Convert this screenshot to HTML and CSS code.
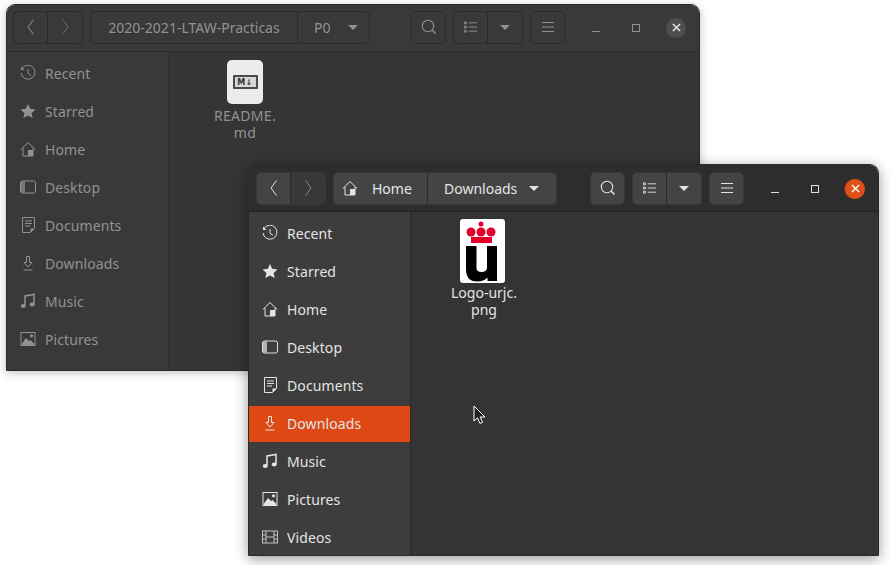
FILE: index.html
```html
<!DOCTYPE html>
<html>
	<head>
		<meta http-equiv="Content-Type" content="text/html; charset=UTF-8">
		<title>Files</title>
		<link rel="stylesheet" href="styles.css">
	</head>
	<body>
		<svg class="defs" width="0" height="0">
			<symbol id="i-back" viewBox="0 0 8 16"><path d="M6.500 .5 1 8l5.500 7.500" fill="none" stroke="currentColor"/></symbol>
			<symbol id="i-next" viewBox="0 0 8 16"><path d="M1.500 .5 7 8l-5.500 7.500" fill="none" stroke="currentColor"/></symbol>
			<symbol id="i-search" viewBox="0 0 16 16"><circle cx="7" cy="7" r="5.700" fill="none" stroke="currentColor" stroke-width="1.100"/><path d="m11.300 11.300 3.200 3.200" fill="none" stroke="currentColor" stroke-width="1.500"/></symbol>
			<symbol id="i-list" viewBox="0 0 14 12"><path d="M.5.5h2v2h-2zM.5 5h2v2h-2zM.5 9.500h2v2h-2z" fill="none" stroke="currentColor"/><path d="M5 1.500h9M5 6h9M5 10.500h9" fill="none" stroke="currentColor"/></symbol>
			<symbol id="i-menu" viewBox="0 0 12 10"><path d="M0 .5h12M0 5h12M0 9.500h12" fill="none" stroke="currentColor"/></symbol>
			<symbol id="i-recent" viewBox="0 0 16 16"><path d="M2 3.500A7 7 0 1 1 1 8" fill="none" stroke="currentColor"/><path d="M1 1.500v3.500h3.500z" fill="currentColor"/><path d="M8 4v4.300l3 2" fill="none" stroke="currentColor"/></symbol>
			<symbol id="i-star" viewBox="0 0 16 16"><path d="m8 1 2.200 4.800 5.300.6-3.900 3.500 1.100 5.200L8 12.400l-4.700 2.700 1.100-5.200L.5 6.400l5.300-.6z" fill="currentColor"/></symbol>
			<symbol id="i-home" viewBox="0 0 16 16"><path d="M.8 8.500 8 1.500l7.200 7M3 7v8h10V7" fill="none" stroke="currentColor"/><path d="M8 9h5v6H8z" fill="currentColor"/></symbol>
			<symbol id="i-desktop" viewBox="0 0 16 16"><rect x=".5" y="2" width="15" height="12" rx="2" fill="none" stroke="currentColor"/><path d="M2 2.500h3v11H2a1 1 0 0 1-1-1v-9a1 1 0 0 1 1-1z" fill="currentColor" opacity=".7"/></symbol>
			<symbol id="i-doc" viewBox="0 0 16 16"><path d="M10.500 15.500h-8v-15h12v11z" fill="none" stroke="currentColor"/><path d="M10.500 15.500v-4h4z" fill="currentColor"/><path d="M5 4h7M5 6.500h7M5 9h5" fill="none" stroke="currentColor"/></symbol>
			<symbol id="i-down" viewBox="0 0 16 16"><path d="M6.500 1.500h3v6h2.500L8 12 4 7.500h2.500z" fill="none" stroke="currentColor"/><path d="M3.500 15h9" fill="none" stroke="currentColor"/></symbol>
			<symbol id="i-music" viewBox="0 0 16 16"><path d="M5 13V3l9-1.500V11" fill="none" stroke="currentColor" stroke-width="1.500"/><ellipse cx="3.200" cy="13" rx="2.500" ry="2" fill="currentColor"/><ellipse cx="12.200" cy="11.500" rx="2.500" ry="2" fill="currentColor"/></symbol>
			<symbol id="i-pic" viewBox="0 0 16 16"><rect x="1" y="1.500" width="14" height="13" fill="none" stroke="currentColor"/><path d="M2 12.500 6 7l3 3 1.500-1 3.500 3.500V14H2z" fill="currentColor"/><circle cx="11.500" cy="4.800" r="1.600" fill="currentColor"/></symbol>
			<symbol id="i-film" viewBox="0 0 16 16"><g opacity=".8"><rect x=".5" y="2" width="15" height="12" fill="none" stroke="currentColor"/><path d="M4 2v12M12 2v12M.5 6h3.500M.5 10h3.500M12 6h3.500M12 10h3.500M4 8h8" fill="none" stroke="currentColor"/></g></symbol>
			<symbol id="i-close" viewBox="0 0 10 10"><path d="m1 1 8 8M9 1 1 9" fill="none" stroke="currentColor" stroke-width="1.500"/></symbol>
		</svg>

		<div class="window back-window">
			<div class="header">
				<div class="group">
					<div class="btn nav"><svg class="chev"><use href="#i-back"/></svg></div>
					<div class="btn nav dim"><svg class="chev"><use href="#i-next"/></svg></div>
				</div>
				<div class="group">
					<div class="btn seg-practicas">2020-2021-LTAW-Practicas</div>
					<div class="btn seg-p0">P0<span class="caret caret-p0"></span></div>
				</div>
				<div class="spacer"></div>
				<div class="btn square"><svg class="ico"><use href="#i-search"/></svg></div>
				<div class="group">
					<div class="btn square"><svg class="ico-list"><use href="#i-list"/></svg></div>
					<div class="btn square"><span class="caret"></span></div>
				</div>
				<div class="btn square"><svg class="ico-menu"><use href="#i-menu"/></svg></div>
				<div class="controls">
					<div class="ctl"><span class="min"></span></div>
					<div class="ctl"><span class="max"></span></div>
					<div class="ctl"><span class="close"><svg class="x"><use href="#i-close"/></svg></span></div>
				</div>
			</div>
			<div class="body">
				<div class="sidebar">
					<div class="row"><svg class="ico"><use href="#i-recent"/></svg>Recent</div>
					<div class="row"><svg class="ico"><use href="#i-star"/></svg>Starred</div>
					<div class="row"><svg class="ico"><use href="#i-home"/></svg>Home</div>
					<div class="row"><svg class="ico"><use href="#i-desktop"/></svg>Desktop</div>
					<div class="row"><svg class="ico"><use href="#i-doc"/></svg>Documents</div>
					<div class="row"><svg class="ico"><use href="#i-down"/></svg>Downloads</div>
					<div class="row"><svg class="ico"><use href="#i-music"/></svg>Music</div>
					<div class="row"><svg class="ico"><use href="#i-pic"/></svg>Pictures</div>
				</div>
				<div class="content">
					<div class="file">
						<div class="md-tile"><span class="md-mark">M↓</span></div>
						<div class="file-name">README.<br>md</div>
					</div>
				</div>
			</div>
		</div>

		<div class="window front-window">
			<div class="header">
				<div class="group">
					<div class="btn nav"><svg class="chev"><use href="#i-back"/></svg></div>
					<div class="btn nav dim"><svg class="chev"><use href="#i-next"/></svg></div>
				</div>
				<div class="group">
					<div class="btn seg-home"><svg class="ico home-ico"><use href="#i-home"/></svg>Home</div>
					<div class="btn seg-downloads">Downloads<span class="caret caret-dl"></span></div>
				</div>
				<div class="spacer"></div>
				<div class="btn square"><svg class="ico"><use href="#i-search"/></svg></div>
				<div class="group">
					<div class="btn square"><svg class="ico-list"><use href="#i-list"/></svg></div>
					<div class="btn square"><span class="caret"></span></div>
				</div>
				<div class="btn square"><svg class="ico-menu"><use href="#i-menu"/></svg></div>
				<div class="controls">
					<div class="ctl"><span class="min"></span></div>
					<div class="ctl"><span class="max"></span></div>
					<div class="ctl"><span class="close"><svg class="x"><use href="#i-close"/></svg></span></div>
				</div>
			</div>
			<div class="body">
				<div class="sidebar">
					<div class="row"><svg class="ico"><use href="#i-recent"/></svg>Recent</div>
					<div class="row"><svg class="ico"><use href="#i-star"/></svg>Starred</div>
					<div class="row"><svg class="ico"><use href="#i-home"/></svg>Home</div>
					<div class="row"><svg class="ico"><use href="#i-desktop"/></svg>Desktop</div>
					<div class="row"><svg class="ico"><use href="#i-doc"/></svg>Documents</div>
					<div class="row active"><svg class="ico"><use href="#i-down"/></svg>Downloads</div>
					<div class="row"><svg class="ico"><use href="#i-music"/></svg>Music</div>
					<div class="row"><svg class="ico"><use href="#i-pic"/></svg>Pictures</div>
					<div class="row"><svg class="ico"><use href="#i-film"/></svg>Videos</div>
				</div>
				<div class="content">
					<div class="file">
						<svg class="logo" width="45" height="64" viewBox="0 0 45 64">
							<rect width="45" height="64" rx="3" fill="#fff"/>
							<circle cx="21" cy="5" r="2.500" fill="#e4002b"/>
							<circle cx="11" cy="13" r="4.500" fill="#e4002b"/>
							<circle cx="21" cy="13" r="4.500" fill="#e4002b"/>
							<circle cx="31" cy="13" r="4.500" fill="#e4002b"/>
							<path d="M11 18h21v6H11z" fill="#e4002b"/>
							<path d="M6 27h10.500v22q0 4 5 4t5.500-4V27H37v35h-9.500v-3.500Q24 62.500 17 62.500 6 62.500 6 50z" fill="#000"/>
						</svg>
						<div class="file-name">Logo-urjc.<br>png</div>
					</div>
				</div>
			</div>
		</div>

		<svg class="cursor" width="14" height="20" viewBox="0 0 14 20">
			<path d="M1 1v15l3.500-3.200 2.500 5.700 2.600-1.200-2.500-5.300H12z" fill="#222" stroke="#fff"/>
		</svg>
	</body>
</html>
```
FILE: styles.css
```css
body {
	margin: 0;
	width: 891px;
	height: 565px;
	position: relative;
	overflow: hidden;
	background-color: #fff;
	font-family: "Noto Sans", "Open Sans", sans-serif;
	font-size: 14px;
}
.defs {
	position: absolute;
}

/* windows sit on a free desktop */
.window {
	position: absolute;
	box-sizing: border-box;
	display: flex;
	flex-direction: column;
	overflow: hidden;
	border: 1px solid #2a2a2a;
	border-top-left-radius: 9px;
	border-top-right-radius: 9px;
}
.back-window {
	left: 6px;
	top: 4px;
	width: 694px;
	height: 367px;
	color: #929292;
	box-shadow: 0 2px 10px rgba(0, 0, 0, .25);
}
.front-window {
	left: 248px;
	top: 164px;
	width: 631px;
	height: 392px;
	color: #e4e4e4;
	box-shadow: 0 3px 14px rgba(0, 0, 0, .4);
}

.header {
	box-sizing: border-box;
	height: 47px;
	flex: none;
	display: flex;
	align-items: flex-start;
	gap: 7px;
	padding-left: 6px;
	border-bottom: 1px solid #262626;
}
.back-window .header {
	background-color: #393939;
	border-bottom-color: #2b2b2b;
	padding-top: 6px;
}
.front-window .header {
	background-color: #2d2d2d;
	border-bottom-color: #222;
	padding-top: 7px;
	padding-left: 7px;
}
.spacer {
	flex: 1;
}
.group {
	display: flex;
}

.btn {
	box-sizing: border-box;
	height: 33px;
	padding-bottom: 1px;
	display: flex;
	align-items: center;
	justify-content: center;
	border: 1px solid #2c2c2c;
	border-radius: 5px;
}
.back-window .btn {
	background-color: #393939;
}
.front-window .btn {
	background-color: #444;
	border-color: #383838;
}
.group .btn:first-child {
	border-top-right-radius: 0;
	border-bottom-right-radius: 0;
}
.group .btn:last-child {
	border-top-left-radius: 0;
	border-bottom-left-radius: 0;
	border-left: 0;
}
.group .btn:first-child {
	border-right-color: #2a2a2a;
}
.nav {
	width: 35px;
}
.front-window .nav.dim {
	background-color: #383838;
	color: #8d8d8d;
}
.back-window .nav.dim {
	color: #6e6e6e;
}
.square {
	width: 35px;
}
.chev {
	width: 8px;
	height: 16px;
}
.ico {
	width: 16px;
	height: 16px;
	flex: none;
}
.ico-list {
	width: 13px;
	height: 12px;
}
.ico-menu {
	width: 12px;
	height: 10px;
}
.caret {
	width: 0;
	height: 0;
	border-left: 5px solid transparent;
	border-right: 5px solid transparent;
	border-top: 5px solid currentColor;
}

.seg-practicas {
	width: 208px;
}
.seg-p0 {
	width: 72px;
	justify-content: flex-start;
	padding-left: 16px;
}
.caret-p0 {
	margin-left: 18px;
}
.seg-home {
	width: 95px;
	justify-content: flex-start;
	padding-left: 8px;
}
.home-ico {
	margin-right: 14px;
}
.seg-downloads {
	width: 129px;
	justify-content: flex-start;
	padding-left: 16px;
}
.caret-dl {
	margin-left: 12px;
}

.controls {
	display: flex;
	margin-left: 4px;
	margin-right: 3px;
}
.ctl {
	width: 40px;
	height: 33px;
	display: flex;
	align-items: center;
	justify-content: center;
}
.min {
	width: 8px;
	height: 1px;
	margin-top: 7px;
	background-color: currentColor;
}
.max {
	box-sizing: border-box;
	width: 8px;
	height: 8px;
	border: 1px solid currentColor;
}
.close {
	width: 20px;
	height: 20px;
	border-radius: 50%;
	display: flex;
	align-items: center;
	justify-content: center;
	color: #eee;
}
.x {
	width: 9px;
	height: 9px;
}
.back-window .close {
	background-color: #4e4e4e;
}
.front-window .close {
	background-color: #e0501b;
	color: #fff;
	box-shadow: -1px 0 0 #7c3015;
}

.body {
	flex: 1;
	display: flex;
	min-height: 0;
}
.sidebar {
	box-sizing: border-box;
	width: 162px;
	flex: none;
	display: flex;
	flex-direction: column;
	gap: 2px;
	padding-top: 4px;
	border-right: 1px solid #2a2a2a;
}
.back-window .sidebar {
	background-color: #393939;
	border-right-color: #303030;
}
.front-window .sidebar {
	background-color: #3d3d3d;
}
.row {
	box-sizing: border-box;
	flex: none;
	height: 36px;
	display: flex;
	align-items: center;
	gap: 9px;
	padding-left: 13px;
	padding-bottom: 2px;
	letter-spacing: .1px;
}
.row.active {
	background-color: #dd4814;
}
.content {
	flex: 1;
	padding: 8px 0 0 23px;
}
.back-window .content {
	background-color: #353535;
	padding-left: 26px;
}
.front-window .content {
	background-color: #343434;
	padding-top: 7px;
}

.file {
	width: 100px;
	display: flex;
	flex-direction: column;
	align-items: center;
	text-align: center;
}
.file-name {
	line-height: 17px;
	margin-top: 3px;
}
.front-window .file-name {
	margin-top: 1px;
}
.back-window .file-name {
	letter-spacing: .3px;
}
.md-tile {
	width: 36px;
	height: 44px;
	display: flex;
	align-items: center;
	justify-content: center;
	background-color: #ececec;
	border-radius: 5px;
}
.md-mark {
	box-sizing: border-box;
	width: 25px;
	height: 14px;
	display: flex;
	align-items: center;
	justify-content: center;
	border: 2px solid #4c4c4c;
	border-radius: 1px;
	background-color: #d8d8d8;
	color: #333;
	font-family: "DejaVu Sans", sans-serif;
	font-size: 8px;
	font-weight: bold;
	letter-spacing: .5px;
}
.logo {
	display: block;
	margin-left: -3px;
}

.cursor {
	position: absolute;
	left: 473px;
	top: 405px;
}
```
